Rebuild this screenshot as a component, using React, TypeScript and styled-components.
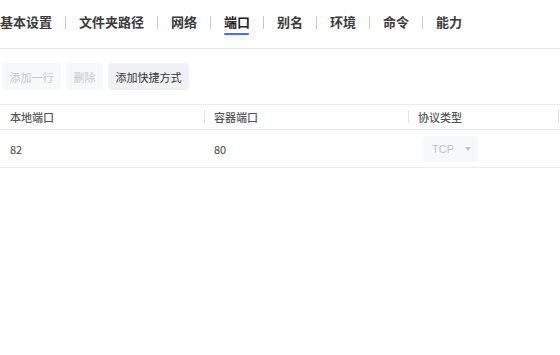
import styled, { createGlobalStyle } from "styled-components";

const GlobalStyle = createGlobalStyle`
  html, body {
    margin: 0;
    padding: 0;
    background: #ffffff;
    font-family: "Noto Sans CJK SC", "Noto Sans", sans-serif;
  }
`;

// Tabs
const TabBar = styled.nav`
  display: flex;
  align-items: flex-start;
  height: 48px;
  box-sizing: content-box;
  padding-top: 0;
  border-bottom: 1px solid #e8e8ea;
  overflow: hidden;
`;

const Tab = styled.div<{ $active?: boolean }>`
  position: relative;
  margin-top: 13px;
  font-size: 13px;
  font-weight: 600;
  color: ${(p) => (p.$active ? "#222" : "#3a3a3a")};
  line-height: 18px;
  white-space: nowrap;

  &::after {
    content: "";
    position: absolute;
    left: 0;
    right: 1px;
    bottom: -4px;
    height: 2px;
    border-radius: 1px;
    background: ${(p) => (p.$active ? "#4e6ef2" : "transparent")};
  }
`;

const TabDivider = styled.span`
  flex: none;
  width: 1px;
  height: 13px;
  margin: 16px 13px 0 13px;
  background: #c8c8cc;
`;

// Toolbar
const Toolbar = styled.div`
  display: flex;
  gap: 5px;
  padding: 14px 0 0 2px;
`;

const Button = styled.button<{ $disabled?: boolean }>`
  height: 27px;
  padding: 0 7.5px;
  border: none;
  border-radius: 4px;
  font-family: inherit;
  font-size: 11px;
  color: ${(p) => (p.$disabled ? "#c4c6cc" : "#333")};
  background: ${(p) => (p.$disabled ? "#f7f8fa" : "#f0f1f4")};
  cursor: ${(p) => (p.$disabled ? "not-allowed" : "pointer")};
`;

// Table
const Table = styled.div`
  margin-top: 14px;
  width: 560px;
  overflow: hidden;
  border-top: 1px solid #ebebed;
`;

const Row = styled.div<{ $head?: boolean }>`
  display: grid;
  grid-template-columns: 204px 204px 150px 40px;
  height: ${(p) => (p.$head ? "24px" : "37px")};
  align-items: center;
  border-bottom: 1px solid #ebebed;
  font-size: 11px;
  color: ${(p) => (p.$head ? "#555" : "#444")};
  font-weight: ${(p) => (p.$head ? 500 : 400)};
`;

const Cell = styled.div<{ $sep?: boolean }>`
  position: relative;
  padding-left: 10px;
  white-space: nowrap;

  &::before {
    content: "";
    display: ${(p) => (p.$sep ? "block" : "none")};
    position: absolute;
    left: 0;
    top: 50%;
    width: 1px;
    height: 13px;
    margin-top: -7px;
    background: #e4e4e6;
  }
`;

const Select = styled.div`
  display: inline-flex;
  align-items: center;
  gap: 11px;
  width: 55px;
  height: 26px;
  box-sizing: border-box;
  padding-left: 9px;
  margin-left: 5px;
  border-radius: 4px;
  background: #f7f8fa;
  color: #c0c2c8;
  font-size: 11px;
  font-family: "Liberation Sans", "Noto Sans", sans-serif;
`;

const Caret = styled.span`
  width: 0;
  height: 0;
  border-left: 3px solid transparent;
  border-right: 3px solid transparent;
  border-top: 4px solid #c0c2c8;
`;

const tabs = ["基本设置", "文件夹路径", "网络", "端口", "别名", "环境", "命令", "能力"];

export default function App() {
  return (
    <>
      <GlobalStyle />
      <TabBar>
        {tabs.map((t, i) => (
          <span key={t} style={{ display: "contents" }}>
            {i > 0 && <TabDivider />}
            <Tab $active={t === "端口"}>{t}</Tab>
          </span>
        ))}
      </TabBar>
      <Toolbar>
        <Button $disabled>添加一行</Button>
        <Button $disabled>删除</Button>
        <Button>添加快捷方式</Button>
      </Toolbar>
      <Table>
        <Row $head>
          <Cell>本地端口</Cell>
          <Cell $sep>容器端口</Cell>
          <Cell $sep>协议类型</Cell>
          <Cell $sep />
        </Row>
        <Row>
          <Cell>82</Cell>
          <Cell>80</Cell>
          <Cell>
            <Select>
              TCP <Caret />
            </Select>
          </Cell>
          <Cell />
        </Row>
      </Table>
    </>
  );
}
